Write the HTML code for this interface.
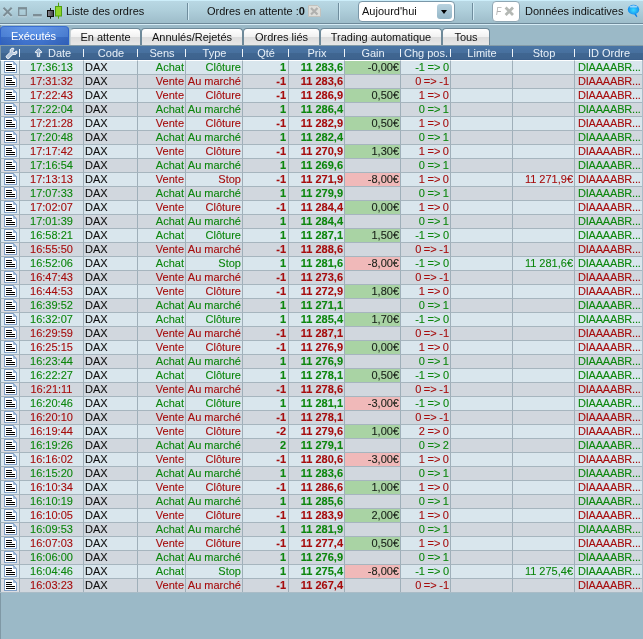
<!DOCTYPE html>
<html lang="fr"><head><meta charset="utf-8"><title>Liste des ordres</title>
<style>
html,body{margin:0;padding:0}
body{width:643px;height:639px;overflow:hidden;background:#9bb9c7;font-family:"Liberation Sans",sans-serif;font-size:11px;color:#111;position:relative}
.abs{position:absolute}
#top,#tabs,#hdr,#tbl{will-change:transform}
#lb{left:0;top:25px;width:1px;height:614px;background:#7f98a5}
#top{left:0;top:0;width:643px;height:23px;background:linear-gradient(#cdeefa 0,#cdeefa 1px,#b9d8e4 1px,#afcfdb 10px,#9fbecb 22px);border-bottom:1px solid #6e8999}
#top:after{content:"";position:absolute;left:0;top:24px;width:643px;height:1px;background:#d6ecf6}
#top .t{position:absolute;top:4px;line-height:14px;white-space:nowrap;color:#111}
.sep{position:absolute;top:3px;width:1px;height:17px;background:#6f8d9d;box-shadow:1px 0 0 #d2ebf5}
#tabs{left:0;top:25px;width:643px;height:21px}
.tab{position:absolute;top:3px;height:17px;line-height:18px;box-sizing:border-box;text-align:center;color:#111;background:linear-gradient(#ffffff 0,#f1f1f1 8px,#dcdcdc 8px,#e7e7e7 16px);border:1px solid #6e8999;border-bottom:0;border-radius:4px 4px 0 0;white-space:nowrap;height:17px}
.tab span{position:relative;top:-1px}
.tab.act{top:1px;height:19px;line-height:20px;color:#fff;border:1px solid #2f62c8;border-bottom:0;border-top-color:#3a6ed0;background:linear-gradient(90deg,rgba(0,0,30,.08) 0,rgba(255,255,255,.04) 35%,rgba(255,255,255,.04) 60%,rgba(0,0,30,.10) 100%),linear-gradient(#5c92e8 0,#5089e1 10px,#3c72ce 10px,#356ac8 18px)}
.tab.act span{top:-1px;left:-1px}
#tabline{left:0;top:45px;width:643px;height:1px;background:#849ca8}
#hdr{left:1px;top:46px;width:642px;height:14px;background:linear-gradient(#4a75a5 0,#47709e 7px,#406691 7px,#3e638e 13px,#375b88 14px);color:#e8f0f8}
#hdr .h{position:absolute;top:0;height:14px;line-height:14px;text-align:center;white-space:nowrap}
#hdr .bar{position:absolute;top:3px;width:1px;height:8px;background:#eef3f8}
#tbl{left:0;top:60px;width:643px;height:533px;background:#a9bcc7}
.row{height:14px;position:relative;white-space:nowrap}
.c{position:absolute;top:0;height:14px;line-height:13px;padding-top:0;box-sizing:border-box;border-left:1px solid #9fafb9;border-top:1px solid #a6b5be;overflow:hidden}
.row.a .c{background:#d9e6ed}
.row.b .c{background:#d1d7de}
.row.a .c0{background:#dde9f0}
.row.b .c0{background:#dbdee4}
.row.b .doc b{background:linear-gradient(225deg,#dbdee4 0,#dbdee4 45%,#86a5cb 45%,#b9cde4 100%)}
.row.first .c{border-top-color:#fdfeff}
.g{color:#0c860c}.r{color:#a60c0c}
.c{-webkit-text-stroke:0.1px currentColor}
.c0{left:0;width:19px;border-left:1px solid #7f98a5}
.c1{left:19px;width:64px;text-align:center}
.c2{left:83px;width:54px;text-align:left;padding-left:1px;color:#111}
.c3{left:137px;width:48px;text-align:right;padding-right:1px}
.c4{left:185px;width:57px;text-align:right;padding-right:1px}
.c5{left:242px;width:46px;text-align:right;padding-right:2px;font-weight:bold}
.c6{left:288px;width:56px;text-align:right;padding-right:1px;font-weight:bold}
.c7{left:344px;width:56px;text-align:right;padding-right:1px;color:#182018}
.c8{left:400px;width:50px;text-align:right;padding-right:1px;word-spacing:-0.5px}
.c9{left:450px;width:62px}
.c10{left:512px;width:62px;text-align:right;padding-right:1px}
.c11{left:574px;width:68px;text-align:left;padding-left:3px;letter-spacing:-0.2px}
.row.a .gp,.row.b .gp{background:#a9d3a4}
.row.a .gn,.row.b .gn{background:#f0b9b9}
.doc{position:absolute;left:3px;top:0;width:13px;height:12px;box-sizing:border-box;background:#fff;border:1px solid #7f9fc6}
.doc:before{content:"";position:absolute;left:1px;top:2px;width:6px;height:1px;background:#000;box-shadow:0 2px 0 #000}
.doc:after{content:"";position:absolute;left:1px;top:6px;width:9px;height:1px;background:#000;box-shadow:0 2px 0 #000}
.doc b{position:absolute;right:-1px;top:-1px;width:4px;height:4px;background:linear-gradient(225deg,#dde9f0 0,#dde9f0 45%,#86a5cb 45%,#b9cde4 100%)}
</style></head><body>
<div id="top" class="abs">
 <svg class="abs" style="left:0;top:0" width="66" height="24" viewBox="0 0 66 24">
  <defs><linearGradient id="cg" x1="0" y1="0" x2="1" y2="0"><stop offset="0" stop-color="#8c8c94"/><stop offset="1" stop-color="#3c3c42"/></linearGradient></defs>
  <g transform="translate(0,1)" opacity=".6">
   <path d="M3.5 7.8 L11.7 16 M11.7 7.8 L3.5 16" stroke="#dff0f7" stroke-width="2" fill="none"/>
   <rect x="18" y="14.6" width="9" height="1.6" fill="#dff0f7"/>
   <rect x="33" y="14" width="8.8" height="2.4" fill="#dff0f7"/>
  </g>
  <path d="M3.5 7.8 L11.7 16 M11.7 7.8 L3.5 16" stroke="#7c8d95" stroke-width="2" fill="none"/>
  <rect x="18.7" y="8.2" width="7.6" height="7.4" fill="none" stroke="#7c8d95" stroke-width="1.3"/>
  <rect x="18" y="7.2" width="9" height="2.2" fill="#7c8d95"/>
  <rect x="33" y="14" width="8.8" height="2.4" fill="#7c8d95"/>
  <line x1="50.5" y1="8" x2="50.5" y2="18.7" stroke="#111" stroke-width="1"/>
  <rect x="47.5" y="10.5" width="6" height="6" fill="url(#cg)" stroke="#111" stroke-width="1"/>
  <line x1="58.5" y1="2.7" x2="58.5" y2="18.7" stroke="#4fa010" stroke-width="1"/>
  <rect x="55.5" y="6.5" width="6" height="9.5" fill="#8fd42a" stroke="#4fa010" stroke-width="1"/>
 </svg>
 <div class="t" style="left:66px">Liste des ordres</div>
 <div class="sep" style="left:187px"></div>
 <div class="t" style="left:207px">Ordres en attente :<b>0</b></div>
 <svg class="abs" style="left:308px;top:5px" width="13" height="12" viewBox="0 0 13 12"><path d="M0.5 0.5 H9.5 L12.5 3.5 V11.5 H0.5 Z" fill="#dededa" stroke="#c2c2be"/><path d="M3 3 L9.5 9.5 M9.5 3 L3 9.5" stroke="#b0b0ae" stroke-width="2.2"/></svg>
 <div class="sep" style="left:338px"></div>
 <div class="abs" style="left:358px;top:1px;width:97px;height:21px;box-sizing:border-box;border:1px solid #7a97a8;border-radius:4px;background:#fff">
   <div class="t" style="left:3px;top:2px">Aujourd'hui</div>
   <div class="abs" style="left:78px;top:2px;width:15px;height:15px;border-radius:3px;background:linear-gradient(#b8d2df,#94b6c7)"></div>
   <div class="abs" style="left:82px;top:8px;width:0;height:0;border-left:3.7px solid transparent;border-right:3.7px solid transparent;border-top:4px solid #000"></div>
 </div>
 <div class="sep" style="left:472px"></div>
 <div class="abs" style="left:492px;top:1px;width:28px;height:21px;box-sizing:border-box;border:1px solid #8fa7b4;border-radius:4px;background:#fff">
   <div class="abs" style="left:2.5px;top:3px;font-style:italic;color:#b0b0b0;font-size:10px;line-height:14px;transform:scaleX(.85);transform-origin:0 0">F</div>
   <svg class="abs" style="left:11px;top:4px" width="11" height="11" viewBox="0 0 11 11"><path d="M1.6 1.6 L9 9 M9 1.6 L1.6 9" stroke="#b4b8b4" stroke-width="2.8"/></svg>
 </div>
 <div class="t" style="left:525px">Données indicatives</div>
 <svg class="abs" style="left:626px;top:3px" width="16" height="16" viewBox="0 0 16 16"><defs><radialGradient id="bg" cx="0.5" cy="0.55" r="0.6"><stop offset="0" stop-color="#3adcff"/><stop offset="1" stop-color="#0a80ea"/></radialGradient><linearGradient id="gl" x1="0" y1="0" x2="0" y2="1"><stop offset="0" stop-color="#fff" stop-opacity=".9"/><stop offset="1" stop-color="#fff" stop-opacity="0"/></linearGradient></defs><path d="M7.8 10.6 C9 12.6 9.8 13.6 10.8 14.2 C11.6 14 11.4 13 10.6 12 L10 10.4 Z" fill="#0a80ea"/><ellipse cx="7.5" cy="6.6" rx="5.7" ry="4.9" fill="url(#bg)"/><ellipse cx="7.5" cy="3.9" rx="3.9" ry="1.5" fill="url(#gl)"/></svg>
</div>
<div id="lb" class="abs"></div>
<div id="tabs" class="abs">
 <div class="tab act" style="left:0;width:69px;z-index:2"><span>Exécutés</span></div>
 <div class="tab" style="left:70px;width:71px;border-left-color:#c8d0d4"><span>En attente</span></div>
 <div class="tab" style="left:141px;width:102px"><span>Annulés/Rejetés</span></div>
 <div class="tab" style="left:243px;width:77px"><span>Ordres liés</span></div>
 <div class="tab" style="left:320px;width:122px"><span>Trading automatique</span></div>
 <div class="tab" style="left:442px;width:48px"><span>Tous</span></div>
</div>
<div id="tabline" class="abs"></div>
<div id="hdr" class="abs">
 <svg class="abs" style="left:3px;top:1px" width="15" height="13" viewBox="0 0 15 13"><path d="M2.2 10 L3.6 11.8 L4.8 11.4 L8.9 7.4 L11.8 7.4 L12.8 6.4 L12.8 4.2 L11.7 4.2 L11.2 5.6 L9.2 5.6 L8.6 4 L9.7 2.6 L9.7 1.3 L7.7 1.3 L6.2 2.7 L6.2 5.2 L2.2 9.2 Z" fill="#b4c7de" stroke="#fff" stroke-width="0.9" stroke-linejoin="round"/></svg>
 <div class="bar" style="left:18px"></div>
 <svg class="abs" style="left:33px;top:1px" width="10" height="12" viewBox="0 0 10 12"><path d="M4.5 1.7 L7.6 4.8 L7.6 5.6 L5.7 5.6 L5.7 9.6 L3.3 9.6 L3.3 5.6 L1.4 5.6 L1.4 4.8 Z" fill="#8eaacb" stroke="#fff" stroke-width="0.9" stroke-linejoin="round"/></svg>
 <div class="h" style="left:47px">Date</div>
 <div class="bar" style="left:82px"></div>
 <div class="h" style="left:83px;width:54px">Code</div>
 <div class="bar" style="left:136px"></div>
 <div class="h" style="left:137px;width:48px">Sens</div>
 <div class="bar" style="left:184px"></div>
 <div class="h" style="left:185px;width:57px">Type</div>
 <div class="bar" style="left:241px"></div>
 <div class="h" style="left:242px;width:46px">Qté</div>
 <div class="bar" style="left:287px"></div>
 <div class="h" style="left:288px;width:56px">Prix</div>
 <div class="bar" style="left:343px"></div>
 <div class="h" style="left:344px;width:56px">Gain</div>
 <div class="bar" style="left:399px"></div>
 <div class="h" style="left:400px;width:50px">Chg pos.</div>
 <div class="bar" style="left:449px"></div>
 <div class="h" style="left:450px;width:62px">Limite</div>
 <div class="bar" style="left:511px"></div>
 <div class="h" style="left:512px;width:62px">Stop</div>
 <div class="bar" style="left:573px"></div>
 <div class="h" style="left:574px;width:68px">ID Ordre</div>
</div>
<div id="tbl" class="abs">
<div class="row a g first"><div class="c c0"><i class="doc"><b></b></i></div><div class="c c1">17:36:13</div><div class="c c2">DAX</div><div class="c c3">Achat</div><div class="c c4">Clôture</div><div class="c c5">1</div><div class="c c6">11 283,6</div><div class="c c7 gp">-0,00€</div><div class="c c8">-1 =&gt; 0</div><div class="c c9"></div><div class="c c10"></div><div class="c c11">DIAAAABR...</div></div>
<div class="row b r"><div class="c c0"><i class="doc"><b></b></i></div><div class="c c1">17:31:32</div><div class="c c2">DAX</div><div class="c c3">Vente</div><div class="c c4">Au marché</div><div class="c c5">-1</div><div class="c c6">11 283,6</div><div class="c c7"></div><div class="c c8">0 =&gt; -1</div><div class="c c9"></div><div class="c c10"></div><div class="c c11">DIAAAABR...</div></div>
<div class="row a r"><div class="c c0"><i class="doc"><b></b></i></div><div class="c c1">17:22:43</div><div class="c c2">DAX</div><div class="c c3">Vente</div><div class="c c4">Clôture</div><div class="c c5">-1</div><div class="c c6">11 286,9</div><div class="c c7 gp">0,50€</div><div class="c c8">1 =&gt; 0</div><div class="c c9"></div><div class="c c10"></div><div class="c c11">DIAAAABR...</div></div>
<div class="row b g"><div class="c c0"><i class="doc"><b></b></i></div><div class="c c1">17:22:04</div><div class="c c2">DAX</div><div class="c c3">Achat</div><div class="c c4">Au marché</div><div class="c c5">1</div><div class="c c6">11 286,4</div><div class="c c7"></div><div class="c c8">0 =&gt; 1</div><div class="c c9"></div><div class="c c10"></div><div class="c c11">DIAAAABR...</div></div>
<div class="row a r"><div class="c c0"><i class="doc"><b></b></i></div><div class="c c1">17:21:28</div><div class="c c2">DAX</div><div class="c c3">Vente</div><div class="c c4">Clôture</div><div class="c c5">-1</div><div class="c c6">11 282,9</div><div class="c c7 gp">0,50€</div><div class="c c8">1 =&gt; 0</div><div class="c c9"></div><div class="c c10"></div><div class="c c11">DIAAAABR...</div></div>
<div class="row b g"><div class="c c0"><i class="doc"><b></b></i></div><div class="c c1">17:20:48</div><div class="c c2">DAX</div><div class="c c3">Achat</div><div class="c c4">Au marché</div><div class="c c5">1</div><div class="c c6">11 282,4</div><div class="c c7"></div><div class="c c8">0 =&gt; 1</div><div class="c c9"></div><div class="c c10"></div><div class="c c11">DIAAAABR...</div></div>
<div class="row a r"><div class="c c0"><i class="doc"><b></b></i></div><div class="c c1">17:17:42</div><div class="c c2">DAX</div><div class="c c3">Vente</div><div class="c c4">Clôture</div><div class="c c5">-1</div><div class="c c6">11 270,9</div><div class="c c7 gp">1,30€</div><div class="c c8">1 =&gt; 0</div><div class="c c9"></div><div class="c c10"></div><div class="c c11">DIAAAABR...</div></div>
<div class="row b g"><div class="c c0"><i class="doc"><b></b></i></div><div class="c c1">17:16:54</div><div class="c c2">DAX</div><div class="c c3">Achat</div><div class="c c4">Au marché</div><div class="c c5">1</div><div class="c c6">11 269,6</div><div class="c c7"></div><div class="c c8">0 =&gt; 1</div><div class="c c9"></div><div class="c c10"></div><div class="c c11">DIAAAABR...</div></div>
<div class="row a r"><div class="c c0"><i class="doc"><b></b></i></div><div class="c c1">17:13:13</div><div class="c c2">DAX</div><div class="c c3">Vente</div><div class="c c4">Stop</div><div class="c c5">-1</div><div class="c c6">11 271,9</div><div class="c c7 gn">-8,00€</div><div class="c c8">1 =&gt; 0</div><div class="c c9"></div><div class="c c10">11 271,9€</div><div class="c c11">DIAAAABR...</div></div>
<div class="row b g"><div class="c c0"><i class="doc"><b></b></i></div><div class="c c1">17:07:33</div><div class="c c2">DAX</div><div class="c c3">Achat</div><div class="c c4">Au marché</div><div class="c c5">1</div><div class="c c6">11 279,9</div><div class="c c7"></div><div class="c c8">0 =&gt; 1</div><div class="c c9"></div><div class="c c10"></div><div class="c c11">DIAAAABR...</div></div>
<div class="row a r"><div class="c c0"><i class="doc"><b></b></i></div><div class="c c1">17:02:07</div><div class="c c2">DAX</div><div class="c c3">Vente</div><div class="c c4">Clôture</div><div class="c c5">-1</div><div class="c c6">11 284,4</div><div class="c c7 gp">0,00€</div><div class="c c8">1 =&gt; 0</div><div class="c c9"></div><div class="c c10"></div><div class="c c11">DIAAAABR...</div></div>
<div class="row b g"><div class="c c0"><i class="doc"><b></b></i></div><div class="c c1">17:01:39</div><div class="c c2">DAX</div><div class="c c3">Achat</div><div class="c c4">Au marché</div><div class="c c5">1</div><div class="c c6">11 284,4</div><div class="c c7"></div><div class="c c8">0 =&gt; 1</div><div class="c c9"></div><div class="c c10"></div><div class="c c11">DIAAAABR...</div></div>
<div class="row a g"><div class="c c0"><i class="doc"><b></b></i></div><div class="c c1">16:58:21</div><div class="c c2">DAX</div><div class="c c3">Achat</div><div class="c c4">Clôture</div><div class="c c5">1</div><div class="c c6">11 287,1</div><div class="c c7 gp">1,50€</div><div class="c c8">-1 =&gt; 0</div><div class="c c9"></div><div class="c c10"></div><div class="c c11">DIAAAABR...</div></div>
<div class="row b r"><div class="c c0"><i class="doc"><b></b></i></div><div class="c c1">16:55:50</div><div class="c c2">DAX</div><div class="c c3">Vente</div><div class="c c4">Au marché</div><div class="c c5">-1</div><div class="c c6">11 288,6</div><div class="c c7"></div><div class="c c8">0 =&gt; -1</div><div class="c c9"></div><div class="c c10"></div><div class="c c11">DIAAAABR...</div></div>
<div class="row a g"><div class="c c0"><i class="doc"><b></b></i></div><div class="c c1">16:52:06</div><div class="c c2">DAX</div><div class="c c3">Achat</div><div class="c c4">Stop</div><div class="c c5">1</div><div class="c c6">11 281,6</div><div class="c c7 gn">-8,00€</div><div class="c c8">-1 =&gt; 0</div><div class="c c9"></div><div class="c c10">11 281,6€</div><div class="c c11">DIAAAABR...</div></div>
<div class="row b r"><div class="c c0"><i class="doc"><b></b></i></div><div class="c c1">16:47:43</div><div class="c c2">DAX</div><div class="c c3">Vente</div><div class="c c4">Au marché</div><div class="c c5">-1</div><div class="c c6">11 273,6</div><div class="c c7"></div><div class="c c8">0 =&gt; -1</div><div class="c c9"></div><div class="c c10"></div><div class="c c11">DIAAAABR...</div></div>
<div class="row a r"><div class="c c0"><i class="doc"><b></b></i></div><div class="c c1">16:44:53</div><div class="c c2">DAX</div><div class="c c3">Vente</div><div class="c c4">Clôture</div><div class="c c5">-1</div><div class="c c6">11 272,9</div><div class="c c7 gp">1,80€</div><div class="c c8">1 =&gt; 0</div><div class="c c9"></div><div class="c c10"></div><div class="c c11">DIAAAABR...</div></div>
<div class="row b g"><div class="c c0"><i class="doc"><b></b></i></div><div class="c c1">16:39:52</div><div class="c c2">DAX</div><div class="c c3">Achat</div><div class="c c4">Au marché</div><div class="c c5">1</div><div class="c c6">11 271,1</div><div class="c c7"></div><div class="c c8">0 =&gt; 1</div><div class="c c9"></div><div class="c c10"></div><div class="c c11">DIAAAABR...</div></div>
<div class="row a g"><div class="c c0"><i class="doc"><b></b></i></div><div class="c c1">16:32:07</div><div class="c c2">DAX</div><div class="c c3">Achat</div><div class="c c4">Clôture</div><div class="c c5">1</div><div class="c c6">11 285,4</div><div class="c c7 gp">1,70€</div><div class="c c8">-1 =&gt; 0</div><div class="c c9"></div><div class="c c10"></div><div class="c c11">DIAAAABR...</div></div>
<div class="row b r"><div class="c c0"><i class="doc"><b></b></i></div><div class="c c1">16:29:59</div><div class="c c2">DAX</div><div class="c c3">Vente</div><div class="c c4">Au marché</div><div class="c c5">-1</div><div class="c c6">11 287,1</div><div class="c c7"></div><div class="c c8">0 =&gt; -1</div><div class="c c9"></div><div class="c c10"></div><div class="c c11">DIAAAABR...</div></div>
<div class="row a r"><div class="c c0"><i class="doc"><b></b></i></div><div class="c c1">16:25:15</div><div class="c c2">DAX</div><div class="c c3">Vente</div><div class="c c4">Clôture</div><div class="c c5">-1</div><div class="c c6">11 276,9</div><div class="c c7 gp">0,00€</div><div class="c c8">1 =&gt; 0</div><div class="c c9"></div><div class="c c10"></div><div class="c c11">DIAAAABR...</div></div>
<div class="row b g"><div class="c c0"><i class="doc"><b></b></i></div><div class="c c1">16:23:44</div><div class="c c2">DAX</div><div class="c c3">Achat</div><div class="c c4">Au marché</div><div class="c c5">1</div><div class="c c6">11 276,9</div><div class="c c7"></div><div class="c c8">0 =&gt; 1</div><div class="c c9"></div><div class="c c10"></div><div class="c c11">DIAAAABR...</div></div>
<div class="row a g"><div class="c c0"><i class="doc"><b></b></i></div><div class="c c1">16:22:27</div><div class="c c2">DAX</div><div class="c c3">Achat</div><div class="c c4">Clôture</div><div class="c c5">1</div><div class="c c6">11 278,1</div><div class="c c7 gp">0,50€</div><div class="c c8">-1 =&gt; 0</div><div class="c c9"></div><div class="c c10"></div><div class="c c11">DIAAAABR...</div></div>
<div class="row b r"><div class="c c0"><i class="doc"><b></b></i></div><div class="c c1">16:21:11</div><div class="c c2">DAX</div><div class="c c3">Vente</div><div class="c c4">Au marché</div><div class="c c5">-1</div><div class="c c6">11 278,6</div><div class="c c7"></div><div class="c c8">0 =&gt; -1</div><div class="c c9"></div><div class="c c10"></div><div class="c c11">DIAAAABR...</div></div>
<div class="row a g"><div class="c c0"><i class="doc"><b></b></i></div><div class="c c1">16:20:46</div><div class="c c2">DAX</div><div class="c c3">Achat</div><div class="c c4">Clôture</div><div class="c c5">1</div><div class="c c6">11 281,1</div><div class="c c7 gn">-3,00€</div><div class="c c8">-1 =&gt; 0</div><div class="c c9"></div><div class="c c10"></div><div class="c c11">DIAAAABR...</div></div>
<div class="row b r"><div class="c c0"><i class="doc"><b></b></i></div><div class="c c1">16:20:10</div><div class="c c2">DAX</div><div class="c c3">Vente</div><div class="c c4">Au marché</div><div class="c c5">-1</div><div class="c c6">11 278,1</div><div class="c c7"></div><div class="c c8">0 =&gt; -1</div><div class="c c9"></div><div class="c c10"></div><div class="c c11">DIAAAABR...</div></div>
<div class="row a r"><div class="c c0"><i class="doc"><b></b></i></div><div class="c c1">16:19:44</div><div class="c c2">DAX</div><div class="c c3">Vente</div><div class="c c4">Clôture</div><div class="c c5">-2</div><div class="c c6">11 279,6</div><div class="c c7 gp">1,00€</div><div class="c c8">2 =&gt; 0</div><div class="c c9"></div><div class="c c10"></div><div class="c c11">DIAAAABR...</div></div>
<div class="row b g"><div class="c c0"><i class="doc"><b></b></i></div><div class="c c1">16:19:26</div><div class="c c2">DAX</div><div class="c c3">Achat</div><div class="c c4">Au marché</div><div class="c c5">2</div><div class="c c6">11 279,1</div><div class="c c7"></div><div class="c c8">0 =&gt; 2</div><div class="c c9"></div><div class="c c10"></div><div class="c c11">DIAAAABR...</div></div>
<div class="row a r"><div class="c c0"><i class="doc"><b></b></i></div><div class="c c1">16:16:02</div><div class="c c2">DAX</div><div class="c c3">Vente</div><div class="c c4">Clôture</div><div class="c c5">-1</div><div class="c c6">11 280,6</div><div class="c c7 gn">-3,00€</div><div class="c c8">1 =&gt; 0</div><div class="c c9"></div><div class="c c10"></div><div class="c c11">DIAAAABR...</div></div>
<div class="row b g"><div class="c c0"><i class="doc"><b></b></i></div><div class="c c1">16:15:20</div><div class="c c2">DAX</div><div class="c c3">Achat</div><div class="c c4">Au marché</div><div class="c c5">1</div><div class="c c6">11 283,6</div><div class="c c7"></div><div class="c c8">0 =&gt; 1</div><div class="c c9"></div><div class="c c10"></div><div class="c c11">DIAAAABR...</div></div>
<div class="row a r"><div class="c c0"><i class="doc"><b></b></i></div><div class="c c1">16:10:34</div><div class="c c2">DAX</div><div class="c c3">Vente</div><div class="c c4">Clôture</div><div class="c c5">-1</div><div class="c c6">11 286,6</div><div class="c c7 gp">1,00€</div><div class="c c8">1 =&gt; 0</div><div class="c c9"></div><div class="c c10"></div><div class="c c11">DIAAAABR...</div></div>
<div class="row b g"><div class="c c0"><i class="doc"><b></b></i></div><div class="c c1">16:10:19</div><div class="c c2">DAX</div><div class="c c3">Achat</div><div class="c c4">Au marché</div><div class="c c5">1</div><div class="c c6">11 285,6</div><div class="c c7"></div><div class="c c8">0 =&gt; 1</div><div class="c c9"></div><div class="c c10"></div><div class="c c11">DIAAAABR...</div></div>
<div class="row a r"><div class="c c0"><i class="doc"><b></b></i></div><div class="c c1">16:10:05</div><div class="c c2">DAX</div><div class="c c3">Vente</div><div class="c c4">Clôture</div><div class="c c5">-1</div><div class="c c6">11 283,9</div><div class="c c7 gp">2,00€</div><div class="c c8">1 =&gt; 0</div><div class="c c9"></div><div class="c c10"></div><div class="c c11">DIAAAABR...</div></div>
<div class="row b g"><div class="c c0"><i class="doc"><b></b></i></div><div class="c c1">16:09:53</div><div class="c c2">DAX</div><div class="c c3">Achat</div><div class="c c4">Au marché</div><div class="c c5">1</div><div class="c c6">11 281,9</div><div class="c c7"></div><div class="c c8">0 =&gt; 1</div><div class="c c9"></div><div class="c c10"></div><div class="c c11">DIAAAABR...</div></div>
<div class="row a r"><div class="c c0"><i class="doc"><b></b></i></div><div class="c c1">16:07:03</div><div class="c c2">DAX</div><div class="c c3">Vente</div><div class="c c4">Clôture</div><div class="c c5">-1</div><div class="c c6">11 277,4</div><div class="c c7 gp">0,50€</div><div class="c c8">1 =&gt; 0</div><div class="c c9"></div><div class="c c10"></div><div class="c c11">DIAAAABR...</div></div>
<div class="row b g"><div class="c c0"><i class="doc"><b></b></i></div><div class="c c1">16:06:00</div><div class="c c2">DAX</div><div class="c c3">Achat</div><div class="c c4">Au marché</div><div class="c c5">1</div><div class="c c6">11 276,9</div><div class="c c7"></div><div class="c c8">0 =&gt; 1</div><div class="c c9"></div><div class="c c10"></div><div class="c c11">DIAAAABR...</div></div>
<div class="row a g"><div class="c c0"><i class="doc"><b></b></i></div><div class="c c1">16:04:46</div><div class="c c2">DAX</div><div class="c c3">Achat</div><div class="c c4">Stop</div><div class="c c5">1</div><div class="c c6">11 275,4</div><div class="c c7 gn">-8,00€</div><div class="c c8">-1 =&gt; 0</div><div class="c c9"></div><div class="c c10">11 275,4€</div><div class="c c11">DIAAAABR...</div></div>
<div class="row b r"><div class="c c0"><i class="doc"><b></b></i></div><div class="c c1">16:03:23</div><div class="c c2">DAX</div><div class="c c3">Vente</div><div class="c c4">Au marché</div><div class="c c5">-1</div><div class="c c6">11 267,4</div><div class="c c7"></div><div class="c c8">0 =&gt; -1</div><div class="c c9"></div><div class="c c10"></div><div class="c c11">DIAAAABR...</div></div>
</div>
</body></html>
